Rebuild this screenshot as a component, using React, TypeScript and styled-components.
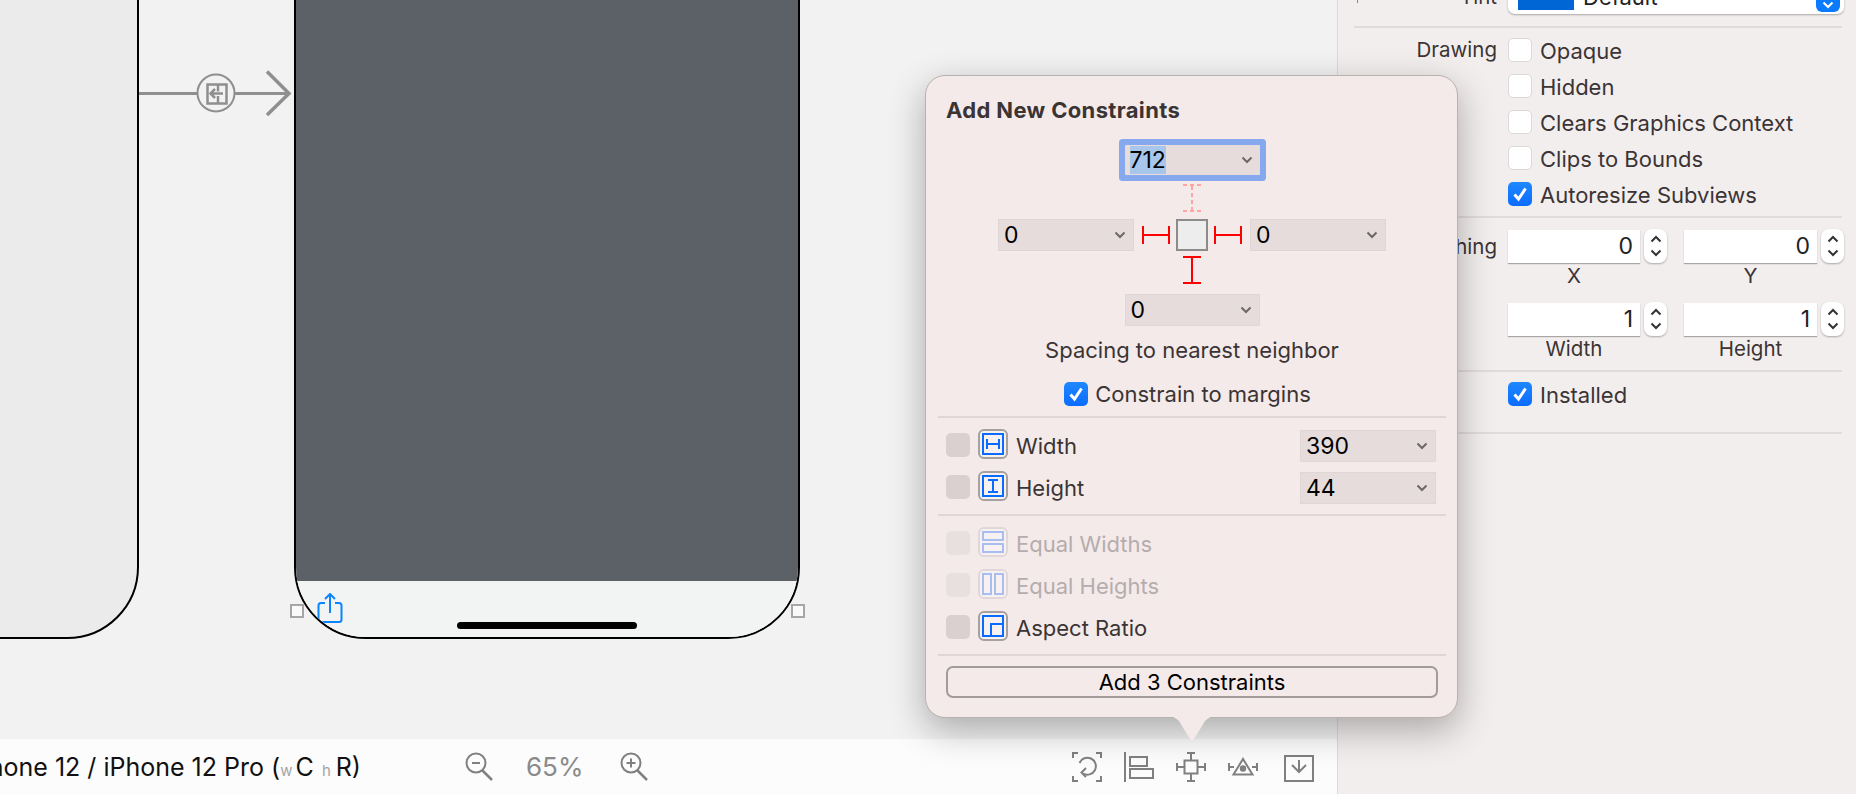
import * as React from 'react'
import styled, { createGlobalStyle } from 'styled-components'

const GlobalStyle = createGlobalStyle`
  html, body {
    margin: 0;
    padding: 0;
    background: #f2f2f2;
  }
  * {
    box-sizing: border-box;
  }
`

const Page = styled.div`
  position: relative;
  display: flex;
  width: 1856px;
  height: 794px;
  overflow: hidden;
  font-family: Inter, 'Noto Sans', sans-serif;
  font-size: 22px;
  color: #3b3434;
`

const Workspace = styled.div`
  display: flex;
  flex-direction: column;
  width: 1337px;
  flex-shrink: 0;
`

const Canvas = styled.div`
  position: relative;
  height: 739px;
  overflow: hidden;
  background: #f2f2f2;
`

type PhoneProps = {
  $left: number
  $width: number
  $bg: string
}
const Phone = styled.div<PhoneProps>`
  position: absolute;
  left: ${p => p.$left}px;
  width: ${p => p.$width}px;
  top: -200px;
  bottom: 100px;
  display: flex;
  flex-direction: column;
  overflow: hidden;
  border: 2px solid #000;
  border-radius: 72px;
  background: ${p => p.$bg};
`

const ScreenBody = styled.div`
  flex: 1;
  background: #5b6167;
`

const PhoneToolbar = styled.div`
  position: relative;
  height: 56px;
  padding: 12px 0 0 21px;
  background: #f2f4f4;
`

const HomeBar = styled.div`
  position: absolute;
  left: 161px;
  bottom: 8px;
  width: 180px;
  height: 7px;
  border-radius: 4px;
  background: #000;
`

const Handle = styled.div<{ $left: number }>`
  position: absolute;
  left: ${p => p.$left}px;
  top: 604px;
  width: 14px;
  height: 14px;
  border: 2px solid #a6a6a6;
  background: #fafafa;
`

const SegueArt = styled.svg`
  position: absolute;
  left: 139px;
  top: 60px;
`

const BottomBar = styled.div`
  flex: 1;
  display: flex;
  align-items: center;
  padding-right: 23px;
  background: #fcfcfc;
`

const DeviceLabel = styled.div`
  display: flex;
  justify-content: flex-end;
  align-items: baseline;
  width: 361px;
  flex-shrink: 0;
  overflow: hidden;
  white-space: pre;
  font-size: 25px;
  color: #111;
`

type MarkProps = {
  $before: number
  $after: number
}
const SizeClassMark = styled.span<MarkProps>`
  margin: 0 ${p => p.$after}px 0 ${p => p.$before}px;
  font-size: 15px;
  color: #a5a5a5;
`

const ZoomGroup = styled.div`
  display: flex;
  align-items: center;
  margin-left: 104px;
`

const ZoomValue = styled.span`
  width: 56px;
  margin: 0 38px 0 32px;
  font-size: 26px;
  white-space: nowrap;
  color: #8a8a8a;
`

const ToolGroup = styled.div`
  display: flex;
  align-items: center;
  gap: 22px;
  margin-left: auto;
`

const LastTool = styled.div`
  display: flex;
  margin-left: 4px;
`

const Inspector = styled.div`
  flex: 1;
  min-width: 0;
  overflow: hidden;
  border-left: 1px solid #dedada;
  background: #f3eeee;
`

const Rule = styled.div`
  height: 2px;
  margin: 0 14px 0 16px;
  background: #e0dcdc;
`

const InspectorRow = styled.div`
  display: grid;
  grid-template-columns: 159px 336px;
  column-gap: 11px;
  align-items: center;
  min-height: 24px;
`

const TintRow = styled(InspectorRow)`
  position: relative;
  margin: -20px 0 12px;
  height: 34px;
`

const TintTick = styled.div`
  position: absolute;
  left: 19px;
  top: 20px;
  width: 1px;
  height: 3px;
  background: #888;
`

const RowLabel = styled.div`
  font-size: 20.5px;
  line-height: 24px;
  text-align: right;
  white-space: nowrap;
  color: #3b3434;
`

const StretchLabel = styled(RowLabel)`
  align-self: start;
  height: 34px;
  line-height: 36px;
`

const TintField = styled.div`
  display: flex;
  align-items: center;
  height: 34px;
  padding: 0 4px 0 10px;
  border-radius: 7px;
  background: #fff;
  box-shadow: 0 1px 2px rgba(0, 0, 0, 0.3);
`

const TintSwatch = styled.div`
  width: 56px;
  height: 26px;
  background: #0066d6;
`

const TintText = styled.span`
  margin-left: 9px;
  color: #222;
`

const TintButton = styled.div`
  display: flex;
  align-items: flex-end;
  justify-content: center;
  margin-left: auto;
  width: 24px;
  height: 30px;
  padding-bottom: 3px;
  border-radius: 6px;
  background: #0a7aff;
`

const CheckSection = styled.div`
  display: flex;
  flex-direction: column;
  gap: 12px;
  padding: 10px 0;
`

const OptionLine = styled.div`
  display: flex;
  align-items: center;
  gap: 8px;
  height: 24px;
  white-space: nowrap;
`

const OptionText = styled.span`
  margin-top: 2px;
`

type BoxProps = {
  $checked?: boolean
}
const CheckBox = styled.div<BoxProps>`
  display: flex;
  align-items: center;
  justify-content: center;
  width: 24px;
  height: 24px;
  flex-shrink: 0;
  border-radius: 5px;
  border: ${p => (p.$checked ? 'none' : '1px solid #dcd8d8')};
  background: ${p =>
    p.$checked ? 'linear-gradient(#1f88ff, #0a6cff)' : '#fff'};
`

const MetricSection = styled(InspectorRow)`
  align-items: start;
  padding: 11px 0 10px;
`

const MetricGrid = styled.div`
  display: grid;
  grid-template-columns: 159px 160px;
  column-gap: 17px;
  row-gap: 15px;
`

const MetricCell = styled.div`
  display: flex;
  flex-direction: column;
  height: 58px;
`

const MetricInputLine = styled.div`
  display: flex;
  align-items: center;
  gap: 4px;
  height: 34px;
`

const MetricInput = styled.div`
  flex: 1;
  height: 33px;
  padding-right: 7px;
  font-size: 23px;
  line-height: 33px;
  text-align: right;
  color: #222;
  background: #fff;
  box-shadow: 0 1px 1px rgba(0, 0, 0, 0.3);
`

const Stepper = styled.div`
  display: flex;
  flex-direction: column;
  align-items: center;
  justify-content: space-between;
  width: 23px;
  height: 34px;
  padding: 6px 0;
  border-radius: 8px;
  background: #fff;
  box-shadow: 0 1px 2px rgba(0, 0, 0, 0.3);
`

const MetricCaption = styled.div`
  height: 24px;
  margin-right: 27px;
  font-size: 20.5px;
  line-height: 25px;
  text-align: center;
  color: #3b3434;
`

const InstalledSection = styled.div`
  padding: 10px 0 26px 170px;
`

const Popover = styled.div`
  position: absolute;
  left: 925px;
  top: 75px;
  width: 533px;
  height: 643px;
  padding: 0 11px 0 12px;
  border: 1px solid #b9b0b0;
  border-radius: 20px;
  background: #f4eaea;
  box-shadow: 0 12px 36px rgba(0, 0, 0, 0.3);
`

const PopoverTail = styled.svg`
  position: absolute;
  left: 238px;
  top: 100%;
  margin-top: -1px;
  overflow: visible;
`

const PopoverTitle = styled.div`
  margin: 22px 0 0 8px;
  font-size: 22px;
  font-weight: 700;
  letter-spacing: 0.35px;
  line-height: 24px;
  color: #3b3434;
`

const PinArea = styled.div`
  display: flex;
  flex-direction: column;
  align-items: center;
`

const PinSlot = styled.div<{ $top: number }>`
  margin-top: ${p => p.$top}px;
`

const PinRow = styled.div`
  display: flex;
  align-items: center;
`

const CenterBox = styled.div`
  width: 32px;
  height: 32px;
  margin: 0 6px;
  border: 2px solid #8c8c8c;
  background: #ededed;
`

const Strut = styled.svg`
  display: block;
  flex-shrink: 0;
`

type ValueFieldProps = {
  $width: number
  $height?: number
  $focused?: boolean
}
const ValueField = styled.div<ValueFieldProps>`
  display: flex;
  align-items: center;
  justify-content: space-between;
  width: ${p => p.$width}px;
  height: ${p => p.$height ?? 32}px;
  flex-shrink: 0;
  padding: 0 7px 0 5px;
  font-size: 23px;
  color: #000;
  background: #e5dcdb;
  border: 1px solid #dfd6d5;
  ${p =>
    p.$focused
      ? 'border: none; padding-left: 5px; box-shadow: 0 0 0 6px #86a8ee; border-radius: 1px;'
      : ''}
`

const SideField = styled(ValueField)`
  margin: 0 8px;
`

const SelectedText = styled.span`
  background: #a8c5ec;
`

const SpacingCaption = styled.div`
  margin-top: 12px;
  line-height: 24px;
  text-align: center;
  color: #3b3434;
`

const MarginsLine = styled.div`
  display: flex;
  justify-content: center;
  align-items: center;
  gap: 7px;
  height: 24px;
  margin: 20px 9px 0 0;
`

const PopoverRule = styled.div`
  height: 2px;
  background: #dfd6d5;
`

const RuleAfterMargins = styled(PopoverRule)`
  margin-top: 10px;
`

const RuleAfterRows = styled(PopoverRule)`
  margin-top: 13px;
`

const ConstraintRows = styled.div`
  display: flex;
  flex-direction: column;
  gap: 12px;
  padding: 11px 10px 0 8px;
`

const ConstraintRow = styled.div<{ $disabled?: boolean }>`
  display: flex;
  align-items: center;
  height: 30px;
  color: ${p => (p.$disabled ? '#b5adad' : '#3b3434')};
`

const RowText = styled.span`
  margin-top: 4px;
`

const GrayCheck = styled.div<{ $disabled?: boolean }>`
  width: 24px;
  height: 24px;
  margin-top: 1px;
  border-radius: 5px;
  background: ${p => (p.$disabled ? '#e8dfdf' : '#d9d0cf')};
`

const ConstraintIcon = styled.div<{ $disabled?: boolean }>`
  display: flex;
  align-items: center;
  justify-content: center;
  width: 30px;
  height: 30px;
  margin: 0 8px;
  border: 2px solid ${p => (p.$disabled ? '#e0d8d8' : '#a6a0a0')};
  border-radius: 6px;
  background: #f7f1f1;
`

const RowValue = styled.div`
  margin: 4px 0 0 auto;
`

const AddButton = styled.div`
  display: flex;
  align-items: center;
  justify-content: center;
  width: 492px;
  height: 32px;
  margin: 10px 0 0 8px;
  border: 2px solid #a39b9b;
  border-radius: 7px;
  color: #000;
  background: #f4eaea;
`

function Chevron() {
  return (
    <svg width="12" height="8" viewBox="0 0 12 8">
      <path d="M1.5 1.5 6 6l4.5-4.5" fill="none" stroke="#6e6767" strokeWidth="2" />
    </svg>
  )
}

function Tick() {
  return (
    <svg width="18" height="18" viewBox="0 0 18 18">
      <path d="M3.5 9.5 7.5 14 14.5 3.5" fill="none" stroke="#fff" strokeWidth="3" />
    </svg>
  )
}

function StepArrow({ up }: { up?: boolean }) {
  return (
    <svg width="12" height="8" viewBox="0 0 12 8">
      <path
        d={up ? 'M1.5 6.5 6 2l4.5 4.5' : 'M1.5 1.5 6 6l4.5-4.5'}
        fill="none"
        stroke="#333"
        strokeWidth="2"
      />
    </svg>
  )
}

function Option({ label, checked }: { label: string; checked?: boolean }) {
  return (
    <OptionLine>
      <CheckBox $checked={checked}>{checked ? <Tick /> : null}</CheckBox>
      <OptionText>{label}</OptionText>
    </OptionLine>
  )
}

function Metric({ value, caption }: { value: string; caption: string }) {
  return (
    <MetricCell>
      <MetricInputLine>
        <MetricInput>{value}</MetricInput>
        <Stepper>
          <StepArrow up />
          <StepArrow />
        </Stepper>
      </MetricInputLine>
      <MetricCaption>{caption}</MetricCaption>
    </MetricCell>
  )
}

function VerticalPin({ dashed }: { dashed?: boolean }) {
  const color = dashed ? '#ffa3a3' : '#ff0000'
  const dash = dashed ? '4 3' : undefined
  return (
    <Strut width="20" height="28" viewBox="0 0 20 28">
      <g stroke={color} strokeWidth="2" strokeDasharray={dash}>
        <path d="M1 1h18M1 27h18M10 2v24" />
      </g>
    </Strut>
  )
}

function HorizontalPin() {
  return (
    <Strut width="28" height="20" viewBox="0 0 28 20">
      <path d="M1 1v18M27 1v18M2 10h24" stroke="#ff0000" strokeWidth="2" />
    </Strut>
  )
}

function ConstraintGlyph({ d, disabled }: { d: string; disabled?: boolean }) {
  return (
    <svg width="22" height="22" viewBox="0 0 22 22">
      <path
        d={d}
        fill="none"
        stroke={disabled ? '#a9bdf0' : '#0a6cff'}
        strokeWidth="2"
      />
    </svg>
  )
}

const GLYPH_WIDTH = 'M1 1h20v20H1zM5 6v10M17 6v10M5 11h12'
const GLYPH_HEIGHT = 'M1 1h20v20H1zM6 5h10M6 17h10M11 5v12'
const GLYPH_EQUAL_W = 'M1 1h20v8H1zM1 13h20v8H1z'
const GLYPH_EQUAL_H = 'M1 1h8v20H1zM13 1h8v20h-8z'
const GLYPH_ASPECT = 'M1 1h20v20H1zM9 21V9h12'

function ToolIcon({ children }: { children: React.ReactNode }) {
  return (
    <svg
      width="30"
      height="30"
      viewBox="0 0 30 30"
      fill="none"
      stroke="#808080"
      strokeWidth="2"
    >
      {children}
    </svg>
  )
}

function Magnifier({ plus }: { plus?: boolean }) {
  return (
    <svg
      width="29"
      height="29"
      viewBox="0 0 29 29"
      fill="none"
      stroke="#808080"
      strokeWidth="2"
    >
      <circle cx="11" cy="11" r="9.5" />
      <path d="M17 18l10 10" strokeWidth="2.5" />
      <path d={plus ? 'M6.5 11h9M11 6.5v9' : 'M7 11h8'} strokeWidth="2" />
    </svg>
  )
}

function App() {
  return (
    <Page>
      <GlobalStyle />
      <Workspace>
        <Canvas>
          <Phone $left={-400} $width={539} $bg="#ebebeb" />
          <Phone $left={294} $width={506} $bg="#f2f4f4">
            <ScreenBody />
            <PhoneToolbar>
              <svg width="26" height="31" viewBox="0 0 26 31" fill="none" stroke="#0a84ff" strokeWidth="2">
                <path d="M8 10H4a2.5 2.5 0 0 0-2.5 2.5v14A2.5 2.5 0 0 0 4 29h18a2.5 2.5 0 0 0 2.5-2.5v-14A2.5 2.5 0 0 0 22 10h-4M13 20V1.5M8 6l5-5 5 5" />
              </svg>
              <HomeBar />
            </PhoneToolbar>
          </Phone>
          <Handle $left={290} />
          <Handle $left={791} />
          <SegueArt width="155" height="70" viewBox="0 0 155 70" fill="none" stroke="#8f8f8f">
            <path d="M0 33.5h58M96 33.5h53" strokeWidth="3" />
            <path d="M128 11.5 150 33.5 128 55" strokeWidth="3.5" />
            <circle cx="77" cy="33" r="18.5" strokeWidth="2" />
            <path d="M68.5 24.5h19v19h-19zM79 24.5v7M79 36v7" strokeWidth="2.5" />
            <path d="M84 33.5H72M76 29l-4.5 4.5L76 38" strokeWidth="2.5" />
          </SegueArt>
        </Canvas>
        <BottomBar>
          <DeviceLabel>
            iPhone 12 / iPhone 12 Pro (
            <SizeClassMark $before={0} $after={3}>w</SizeClassMark>C
            <SizeClassMark $before={4} $after={5}> h</SizeClassMark>R)
          </DeviceLabel>
          <ZoomGroup>
            <Magnifier />
            <ZoomValue>65%</ZoomValue>
            <Magnifier plus />
          </ZoomGroup>
          <ToolGroup>
            <ToolIcon>
              <path d="M1 6V1h5M24 1h5v5M29 24v5h-5M6 29H1v-5" />
              <path d="M7.5 11A8.5 8.5 0 1 1 11 21.5" />
              <path d="M14 16l-4.5 4.5L14 25" />
            </ToolIcon>
            <ToolIcon>
              <path d="M1 0v30M6 5h17v9H6zM6 17h23v9H6z" />
            </ToolIcon>
            <ToolIcon>
              <path d="M8.5 8.5h13v13h-13zM11 1h8M15 1v7M11 29h8M15 22v7M1 11v8M1 15h7M29 11v8M22 15h7" />
            </ToolIcon>
            <ToolIcon>
              <path d="M15 7 24.5 22.5h-19zM1 11v8M1 15h5M29 11v8M24 15h5" />
              <circle cx="15" cy="16.5" r="2.2" fill="#808080" />
            </ToolIcon>
            <LastTool>
              <ToolIcon>
                <path d="M1 4h28v25H1zM15 8v12M8 13l7 7 7-7" />
              </ToolIcon>
            </LastTool>
          </ToolGroup>
        </BottomBar>
      </Workspace>

      <Inspector>
        <TintRow>
          <TintTick />
          <RowLabel>Tint</RowLabel>
          <TintField>
            <TintSwatch />
            <TintText>Default</TintText>
            <TintButton>
              <svg width="12" height="8" viewBox="0 0 12 8">
                <path d="M1.5 1.5 6 6l4.5-4.5" fill="none" stroke="#fff" strokeWidth="2" />
              </svg>
            </TintButton>
          </TintField>
        </TintRow>
        <Rule />
        <CheckSection>
          <InspectorRow>
            <RowLabel>Drawing</RowLabel>
            <Option label="Opaque" />
          </InspectorRow>
          <InspectorRow>
            <div />
            <Option label="Hidden" />
          </InspectorRow>
          <InspectorRow>
            <div />
            <Option label="Clears Graphics Context" />
          </InspectorRow>
          <InspectorRow>
            <div />
            <Option label="Clips to Bounds" />
          </InspectorRow>
          <InspectorRow>
            <div />
            <Option label="Autoresize Subviews" checked />
          </InspectorRow>
        </CheckSection>
        <Rule />
        <MetricSection>
          <StretchLabel>Stretching</StretchLabel>
          <MetricGrid>
            <Metric value="0" caption="X" />
            <Metric value="0" caption="Y" />
            <Metric value="1" caption="Width" />
            <Metric value="1" caption="Height" />
          </MetricGrid>
        </MetricSection>
        <Rule />
        <InstalledSection>
          <Option label="Installed" checked />
        </InstalledSection>
        <Rule />
      </Inspector>

      <Popover>
        <PopoverTitle>Add New Constraints</PopoverTitle>
        <PinArea>
          <PinSlot $top={23}>
            <ValueField $width={135} $height={30} $focused>
              <SelectedText>712</SelectedText>
              <Chevron />
            </ValueField>
          </PinSlot>
          <PinSlot $top={9}>
            <VerticalPin dashed />
          </PinSlot>
          <PinSlot $top={7}>
            <PinRow>
              <SideField $width={136}>
                0
                <Chevron />
              </SideField>
              <HorizontalPin />
              <CenterBox />
              <HorizontalPin />
              <SideField $width={136}>
                0
                <Chevron />
              </SideField>
            </PinRow>
          </PinSlot>
          <PinSlot $top={5}>
            <VerticalPin />
          </PinSlot>
          <PinSlot $top={10}>
            <ValueField $width={135}>
              0
              <Chevron />
            </ValueField>
          </PinSlot>
        </PinArea>
        <SpacingCaption>Spacing to nearest neighbor</SpacingCaption>
        <MarginsLine>
          <CheckBox $checked>
            <Tick />
          </CheckBox>
          Constrain to margins
        </MarginsLine>
        <RuleAfterMargins />
        <ConstraintRows>
          <ConstraintRow>
            <GrayCheck />
            <ConstraintIcon>
              <ConstraintGlyph d={GLYPH_WIDTH} />
            </ConstraintIcon>
            <RowText>Width</RowText>
            <RowValue>
              <ValueField $width={136}>
                390
                <Chevron />
              </ValueField>
            </RowValue>
          </ConstraintRow>
          <ConstraintRow>
            <GrayCheck />
            <ConstraintIcon>
              <ConstraintGlyph d={GLYPH_HEIGHT} />
            </ConstraintIcon>
            <RowText>Height</RowText>
            <RowValue>
              <ValueField $width={136}>
                44
                <Chevron />
              </ValueField>
            </RowValue>
          </ConstraintRow>
        </ConstraintRows>
        <RuleAfterRows />
        <ConstraintRows>
          <ConstraintRow $disabled>
            <GrayCheck $disabled />
            <ConstraintIcon $disabled>
              <ConstraintGlyph d={GLYPH_EQUAL_W} disabled />
            </ConstraintIcon>
            <RowText>Equal Widths</RowText>
          </ConstraintRow>
          <ConstraintRow $disabled>
            <GrayCheck $disabled />
            <ConstraintIcon $disabled>
              <ConstraintGlyph d={GLYPH_EQUAL_H} disabled />
            </ConstraintIcon>
            <RowText>Equal Heights</RowText>
          </ConstraintRow>
          <ConstraintRow>
            <GrayCheck />
            <ConstraintIcon>
              <ConstraintGlyph d={GLYPH_ASPECT} />
            </ConstraintIcon>
            <RowText>Aspect Ratio</RowText>
          </ConstraintRow>
        </ConstraintRows>
        <RuleAfterRows />
        <AddButton>Add 3 Constraints</AddButton>
        <PopoverTail width="56" height="26" viewBox="0 0 56 26">
          <path d="M0 0c8 0 11 1 15 5l11 18c1.5 2.4 2.5 2.4 4 0L41 5c4-4 7-5 15-5z" fill="#f4eaea" />
        </PopoverTail>
      </Popover>
    </Page>
  )
}

export default App
